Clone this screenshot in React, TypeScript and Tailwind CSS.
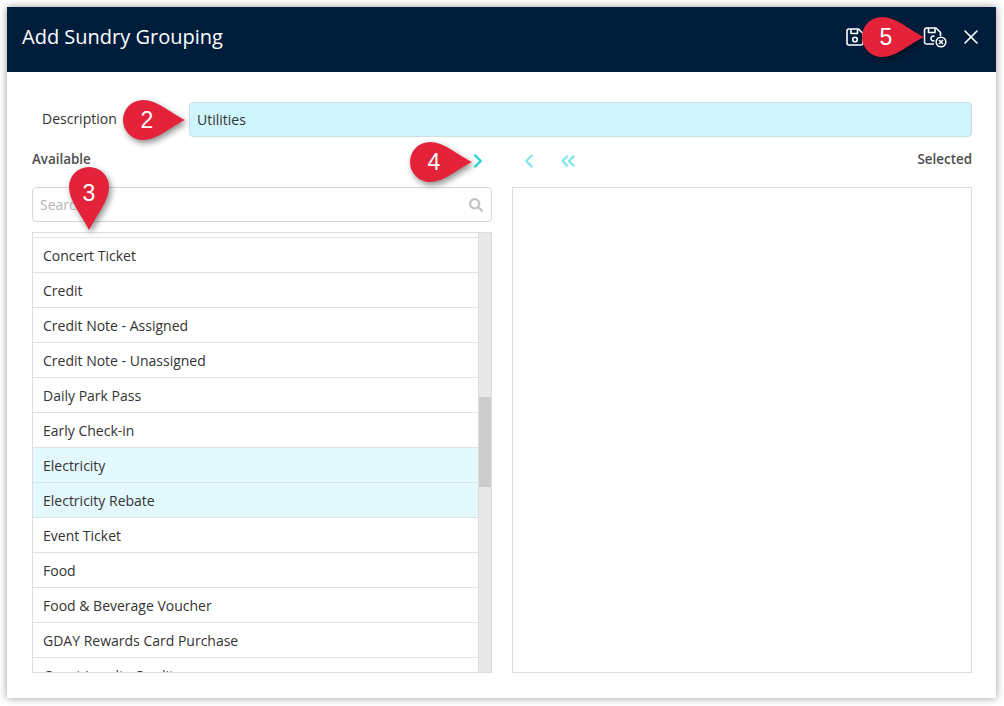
import React from 'react';
import { ChevronLeft, ChevronRight, ChevronsLeft, X } from 'lucide-react';
import { FaSearch } from 'react-icons/fa';

const items = [
  'Concert Ticket',
  'Credit',
  'Credit Note - Assigned',
  'Credit Note - Unassigned',
  'Daily Park Pass',
  'Early Check-in',
  'Electricity',
  'Electricity Rebate',
  'Event Ticket',
  'Food',
  'Food & Beverage Voucher',
  'GDAY Rewards Card Purchase',
  'Guest Loyalty Credit',
];

const selected = ['Electricity', 'Electricity Rebate'];

// Callout pin pointing right, the down variant is the same drop turned round
const Pin: React.FC<{ label: string; className: string; down?: boolean }> = ({ label, className, down }) => (
  <div className={`absolute ${down ? 'w-[40px] h-[63px]' : 'w-[62px] h-[40px]'} ${className}`}>
    <svg
      width={down ? 40 : 62}
      height={down ? 63 : 40}
      viewBox={down ? '0 0 40 63' : '0 0 62 40'}
      className="absolute inset-0 overflow-visible drop-shadow-[2px_3px_3px_rgba(0,0,0,0.45)]"
    >
      {down ? (
        <path d="M20 63 C12 47 0 34 0 20 A20 20 0 0 1 40 20 C40 34 28 47 20 63 Z" fill="#e4233b" />
      ) : (
        <path d="M62 20 C46 12 34 0 20 0 A20 20 0 0 0 20 40 C34 40 46 28 62 20 Z" fill="#e4233b" />
      )}
    </svg>
    <span
      className={`absolute text-white text-[23px] leading-[40px] font-['Liberation_Sans',sans-serif] text-center w-[40px] ${
        down ? 'left-0 top-[6px]' : 'left-[4px] top-0'
      }`}
    >
      {label}
    </span>
  </div>
);

const SaveIcon = () => (
  <svg width="20" height="20" viewBox="0 0 20 20" fill="none" stroke="#ffffff" strokeWidth="1.6" strokeLinejoin="round">
    <path d="M4 2 H13.5 L18 6.5 V16 A2 2 0 0 1 16 18 H4 A2 2 0 0 1 2 16 V4 A2 2 0 0 1 4 2 Z" />
    <path d="M6 2 V6.5 H12.5 V2.5" />
    <circle cx="10" cy="12.5" r="2.3" />
  </svg>
);

const SaveCloseIcon = () => (
  <svg width="24" height="22" viewBox="0 0 24 22" fill="none" stroke="#ffffff" strokeWidth="1.6" strokeLinejoin="round">
    <path d="M11 18 H3.5 A2 2 0 0 1 1.5 16 V4 A2 2 0 0 1 3.5 2 H13 L17.5 6.5 V10" />
    <path d="M5.5 2 V6.5 H12 V2.5" />
    <path d="M11.5 10.4 A2.4 2.4 0 1 0 11.5 14.6" />
    <circle cx="18" cy="16" r="4.8" />
    <path d="M16 14 L20 18 M20 14 L16 18" />
  </svg>
);

export default function App() {
  return (
    <div className="w-[1004px] h-[706px] bg-white p-[7px] font-['Open_Sans',sans-serif] text-[14px] text-[#333333] overflow-hidden">
      <div className="relative w-[989px] h-[691px] bg-white shadow-[0_0_8px_rgba(0,0,0,0.4)] flex flex-col">
        <div className="h-[65px] shrink-0 bg-[#001e3c] flex items-center pl-[15px] pr-[15px] pb-[5px]">
          <h1 className="flex-1 text-white text-[20px] font-normal">Add Sundry Grouping</h1>
          <div className="flex items-center text-white">
            <div className="ml-[1px]">
              <SaveIcon />
            </div>
            <div className="w-[58px]" />
            <SaveCloseIcon />
            <X className="w-[24px] h-[24px] ml-[12px] -mr-[2px]" strokeWidth={1.6} />
          </div>
        </div>

        <div className="flex-1 flex flex-col pl-[25px] pr-[24px] pt-[30px]">
          <div className="flex items-center h-[35px]">
            <label className="w-[157px] pl-[10px] -mt-[2px]">Description</label>
            <div className="flex-1 h-[35px] bg-[#cff6fd] border border-[#c9dfe4] rounded-[4px] flex items-center px-[7px]">
              Utilities
            </div>
          </div>

          <div className="flex h-[50px] pt-[12px] text-[13.4px] font-semibold text-[#4d4d4d]">
            <div className="w-[435px]">Available</div>
            <div className="flex items-start pt-[1px] text-[#21d3d6]">
              <ChevronRight className="w-[22px] h-[22px] -mr-[1px]" strokeWidth={2.6} />
              <ChevronLeft className="w-[22px] h-[22px] ml-[30px] text-[#83e8ea]" strokeWidth={2.6} />
              <ChevronsLeft className="w-[24px] h-[22px] ml-[16px] text-[#83e8ea]" strokeWidth={2.6} />
            </div>
            <div className="flex-1 text-right">Selected</div>
          </div>

          <div className="flex gap-[20px] h-[486px]">
            <div className="w-[460px] flex flex-col">
              <div className="h-[35px] shrink-0 border border-[#d4d4d4] rounded-[4px] flex items-center pl-[7px] pr-[8px]">
                <span className="flex-1 text-[#b5b5b5]">Search</span>
                <FaSearch className="w-[14px] h-[14px] text-[#c4c4c4]" />
              </div>
              <div className="mt-[10px] h-[441px] flex border border-[#dddddd] overflow-hidden">
                <div className="flex-1 overflow-hidden">
                  <div className="h-[5px] border-b border-[#e2e2e2]" />
                  {items.map(item => (
                    <div
                      key={item}
                      className={`h-[35px] border-b flex items-center pl-[10px] ${
                        selected.includes(item) ? 'bg-[#e3f9fd] border-[#d3e6ea]' : 'border-[#e2e2e2]'
                      }`}
                    >
                      {item}
                    </div>
                  ))}
                </div>
                <div className="w-[13px] shrink-0 bg-[#e8e8e8] border-l border-[#dddddd]">
                  <div className="mt-[164px] h-[90px] bg-[#cccccc]" />
                </div>
              </div>
            </div>
            <div className="flex-1 border border-[#dddddd]" />
          </div>
        </div>

        <Pin label="2" className="left-[116px] top-[93px]" />
        <Pin label="3" down className="left-[62px] top-[160px]" />
        <Pin label="4" className="left-[403px] top-[135px]" />
        <Pin label="5" className="left-[855px] top-[10px]" />
      </div>
    </div>
  );
}
